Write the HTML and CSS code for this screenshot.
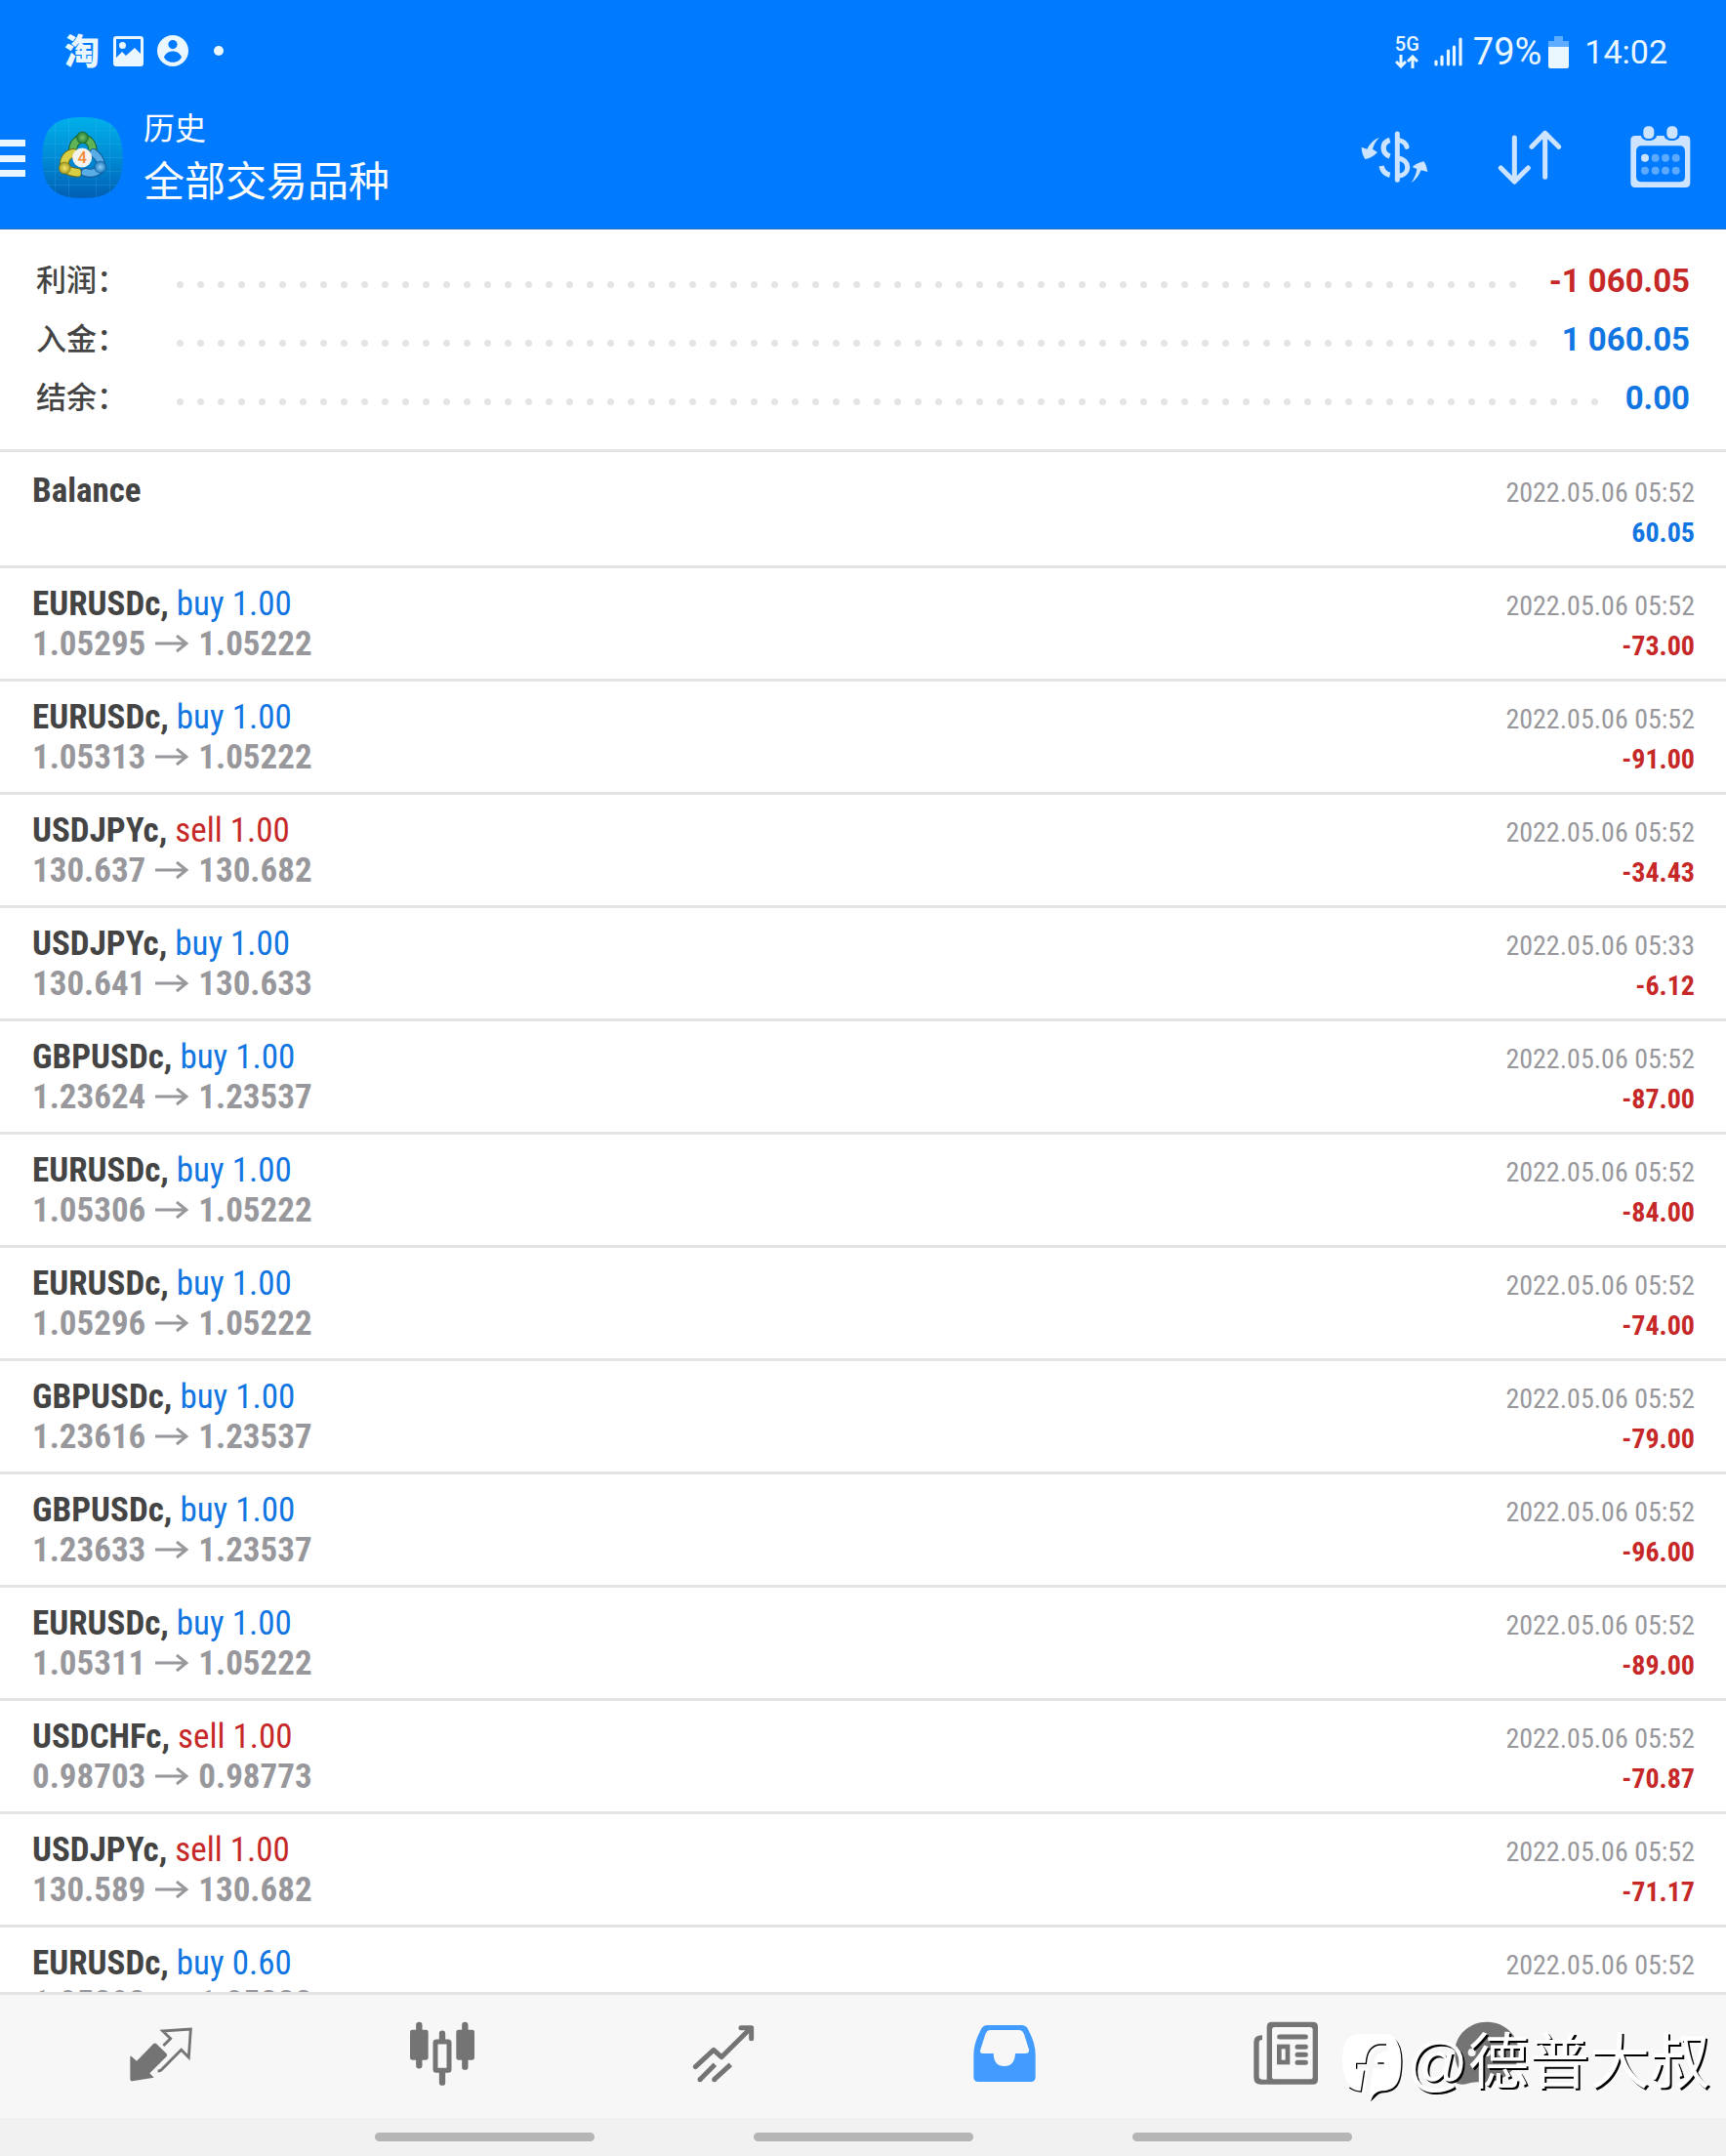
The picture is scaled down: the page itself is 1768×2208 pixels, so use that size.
FILE: index.html
```html
<!DOCTYPE html>
<html lang="zh-CN">
<head>
<meta charset="utf-8">
<title>历史</title>
<link rel="stylesheet" href="styles.css">
</head>
<body>
<div class="app">
  <header class="header">
    <div class="status">
      <div class="status-left">
        <span class="taobao">淘</span>
        <svg width="31" height="31" viewBox="0 0 31 31"><path fill-rule="evenodd" d="M3 0h25a3 3 0 0 1 3 3v25a3 3 0 0 1-3 3H3a3 3 0 0 1-3-3V3a3 3 0 0 1 3-3zM3 3v19l6-6 4 4 9-8 6 6V3z"/><circle cx="9.500" cy="9.500" r="3.500"/></svg>
        <svg width="32" height="32" viewBox="0 0 32 32"><path fill-rule="evenodd" d="M16 0a16 16 0 1 1 0 32a16 16 0 1 1 0-32zM16 5a4.600 4.600 0 1 0 0 9.200a4.600 4.600 0 1 0 0-9.200zM7 22.500c3 7 15 7 18 0c-3-8-15-8-18 0z"/></svg>
        <svg class="more-dot" width="10" height="10" viewBox="0 0 10 10"><circle cx="5" cy="5" r="5"/></svg>
      </div>
      <div class="status-right">
        <div class="network">
          <span>5G</span>
          <svg width="24" height="14" viewBox="0 0 24 14"><path class="line" stroke-width="3" d="M6 0v12M1 7l5 5 5-5M18 14V2M13 7l5-5 5 5"/></svg>
        </div>
        <svg class="signal" width="29" height="30" viewBox="0 0 29 30"><path class="line" stroke-width="3.200" stroke-linecap="round" d="M2 25v3M8 20v8M14.500 14v14M20.500 10v18M27 2v26"/></svg>
        <span class="battery-level">79%</span>
        <svg class="battery" width="21" height="33" viewBox="0 0 21 33"><path opacity=".4" d="M6 0h9v5h6v7H0V5h6z"/><path d="M0 11h21v20a2 2 0 0 1-2 2H2a2 2 0 0 1-2-2z"/></svg>
        <time class="clock">14:02</time>
      </div>
    </div>
    <div class="toolbar">
      <button class="menu" aria-label="菜单"><svg width="26" height="40" viewBox="0 0 26 40"><path d="M0 2h26v7H0zM0 18h26v7H0zM0 33h26v7H0z"/></svg></button>
      <svg class="logo" width="83" height="83" viewBox="8 14 248 250">
        <defs>
          <linearGradient id="sky" x1="0" y1="0" x2="0" y2="1"><stop offset="0" stop-color="#00b0ea"/><stop offset=".5" stop-color="#008bd5"/><stop offset="1" stop-color="#005fb4"/></linearGradient>
          <radialGradient id="green"><stop offset="0" stop-color="#78c36c"/><stop offset="1" stop-color="#237d35"/></radialGradient>
          <radialGradient id="gold"><stop offset="0" stop-color="#f3e86c"/><stop offset="1" stop-color="#a79a22"/></radialGradient>
          <radialGradient id="blue"><stop offset="0" stop-color="#8fd0f6"/><stop offset="1" stop-color="#1f7cc0"/></radialGradient>
        </defs>
        <path fill="url(#sky)" d="M132 14c88 0 124 34 124 125s-36 125-124 125S8 230 8 139 44 14 132 14z"/>
        <path stroke="#5cc4f0" stroke-opacity=".3" stroke-width="2" fill="none" d="M48 30v218M90 18v242M174 18v242M216 30v218M24 56h216M12 97h240M8 139h248M12 181h240M24 223h216"/>
        <g fill="none" stroke-linecap="round">
          <path stroke="#17602a" stroke-width="27" d="M102 118c0-50 62-50 62 0"/><path stroke="#5fb357" stroke-width="21" d="M102 118c0-50 62-50 62 0"/>
          <path stroke="#716c14" stroke-width="29" d="M104 125c-36 6-42 58 12 60"/><path stroke="#d9cf45" stroke-width="23" d="M104 125c-36 6-42 58 12 60"/>
          <path stroke="#145591" stroke-width="27" d="M166 124c44 36 18 72-26 60"/><path stroke="#58ade6" stroke-width="21" d="M166 124c44 36 18 72-26 60"/>
        </g>
        <circle cx="132" cy="77" r="18" fill="url(#green)" stroke="#17602a" stroke-width="2"/>
        <circle cx="77" cy="171" r="18" fill="url(#gold)" stroke="#716c14" stroke-width="2"/>
        <circle cx="187" cy="168" r="18" fill="url(#blue)" stroke="#145591" stroke-width="2"/>
        <circle cx="131" cy="139" r="30" fill="#f4f2ee"/>
        <text x="131" y="156" class="logo-digit">4</text>
      </svg>
      <div class="titles"><h1>历史</h1><p>全部交易品种</p></div>
      <div class="actions">
        <button aria-label="交易品种"><svg width="70" height="54" viewBox="25 37 210 162">
          <path d="M82 57Q66 72 61 93l15 10q-18 18-38 21Q27 107 27 87l17 6Q58 65 82 57zM180 196q18-10 30-38l20 5Q228 145 219 131q-20 3-36 17l14 6q-3 22-17 42z"/>
          <path class="line" stroke-width="15" d="M137 46v142" stroke-linecap="round"/>
          <path class="line" stroke-width="16" d="M114 65c-26 8-26 41 0 50M88 145q5 23 26 28"/>
          <path class="line" stroke-width="15" stroke-linecap="round" d="M142 66q20 4 24 20"/><path class="line" stroke-width="15" d="M139 122c38 2 40 50 0 54"/>
        </svg></button>
        <button aria-label="排序"><svg width="66" height="57" viewBox="513 397 198 171"><path class="line" stroke-width="15" stroke-linecap="round" stroke-linejoin="round" d="M565 421v135M523 514l42 42 42-42M659 542V407M618 449l41-42 42 42"/></svg></button>
        <button aria-label="日期"><svg width="62" height="64" viewBox="929 384 186 192">
          <path fill-rule="evenodd" d="M944 414h18c2 20 46 20 48 0h23c2 20 46 20 48 0h18q14 0 14 14v131q0 14-14 14H944q-14 0-14-14V428q0-14 14-14zM964 445q-17 0-17 17v77q0 17 17 17h116q17 0 17-17v-77q0-17-17-17z"/>
          <rect x="969" y="385" width="33" height="38" rx="14"/><rect x="1041" y="385" width="33" height="38" rx="14"/>
          <circle cx="974" cy="482" r="12"/><g opacity=".45"><circle cx="1006" cy="482" r="12"/><circle cx="1037" cy="482" r="12"/><circle cx="1069" cy="482" r="12"/><circle cx="974" cy="521" r="12"/><circle cx="1006" cy="521" r="12"/><circle cx="1037" cy="521" r="12"/><circle cx="1069" cy="521" r="12"/></g>
        </svg></button>
      </div>
    </div>
  </header>

  <dl class="summary">
    <div><dt>利润：</dt><span class="dots"></span><dd class="loss">-1 060.05</dd></div>
    <div><dt>入金：</dt><span class="dots"></span><dd class="gain">1 060.05</dd></div>
    <div><dt>结余：</dt><span class="dots"></span><dd class="gain">0.00</dd></div>
  </dl>

  <svg hidden><symbol id="arrow" viewBox="0 0 34 20"><path d="M0 9h32M22 1l10 8-10 8" fill="none" stroke="#98989c" stroke-width="3"/></symbol></svg>
  <main class="deals">
    <article class="balance"><p class="line1"><b>Balance</b><time>2022.05.06 05:52</time></p><p class="line2"><span>&nbsp;</span><strong class="gain">60.05</strong></p></article>
    <article><p class="line1"><span><b>EURUSDc,</b> <span class="gain">buy 1.00</span></span><time>2022.05.06 05:52</time></p><p class="line2"><span class="prices">1.05295<svg><use href="#arrow"/></svg>1.05222</span><strong class="loss">-73.00</strong></p></article>
    <article><p class="line1"><span><b>EURUSDc,</b> <span class="gain">buy 1.00</span></span><time>2022.05.06 05:52</time></p><p class="line2"><span class="prices">1.05313<svg><use href="#arrow"/></svg>1.05222</span><strong class="loss">-91.00</strong></p></article>
    <article><p class="line1"><span><b>USDJPYc,</b> <span class="loss">sell 1.00</span></span><time>2022.05.06 05:52</time></p><p class="line2"><span class="prices">130.637<svg><use href="#arrow"/></svg>130.682</span><strong class="loss">-34.43</strong></p></article>
    <article><p class="line1"><span><b>USDJPYc,</b> <span class="gain">buy 1.00</span></span><time>2022.05.06 05:33</time></p><p class="line2"><span class="prices">130.641<svg><use href="#arrow"/></svg>130.633</span><strong class="loss">-6.12</strong></p></article>
    <article><p class="line1"><span><b>GBPUSDc,</b> <span class="gain">buy 1.00</span></span><time>2022.05.06 05:52</time></p><p class="line2"><span class="prices">1.23624<svg><use href="#arrow"/></svg>1.23537</span><strong class="loss">-87.00</strong></p></article>
    <article><p class="line1"><span><b>EURUSDc,</b> <span class="gain">buy 1.00</span></span><time>2022.05.06 05:52</time></p><p class="line2"><span class="prices">1.05306<svg><use href="#arrow"/></svg>1.05222</span><strong class="loss">-84.00</strong></p></article>
    <article><p class="line1"><span><b>EURUSDc,</b> <span class="gain">buy 1.00</span></span><time>2022.05.06 05:52</time></p><p class="line2"><span class="prices">1.05296<svg><use href="#arrow"/></svg>1.05222</span><strong class="loss">-74.00</strong></p></article>
    <article><p class="line1"><span><b>GBPUSDc,</b> <span class="gain">buy 1.00</span></span><time>2022.05.06 05:52</time></p><p class="line2"><span class="prices">1.23616<svg><use href="#arrow"/></svg>1.23537</span><strong class="loss">-79.00</strong></p></article>
    <article><p class="line1"><span><b>GBPUSDc,</b> <span class="gain">buy 1.00</span></span><time>2022.05.06 05:52</time></p><p class="line2"><span class="prices">1.23633<svg><use href="#arrow"/></svg>1.23537</span><strong class="loss">-96.00</strong></p></article>
    <article><p class="line1"><span><b>EURUSDc,</b> <span class="gain">buy 1.00</span></span><time>2022.05.06 05:52</time></p><p class="line2"><span class="prices">1.05311<svg><use href="#arrow"/></svg>1.05222</span><strong class="loss">-89.00</strong></p></article>
    <article><p class="line1"><span><b>USDCHFc,</b> <span class="loss">sell 1.00</span></span><time>2022.05.06 05:52</time></p><p class="line2"><span class="prices">0.98703<svg><use href="#arrow"/></svg>0.98773</span><strong class="loss">-70.87</strong></p></article>
    <article><p class="line1"><span><b>USDJPYc,</b> <span class="loss">sell 1.00</span></span><time>2022.05.06 05:52</time></p><p class="line2"><span class="prices">130.589<svg><use href="#arrow"/></svg>130.682</span><strong class="loss">-71.17</strong></p></article>
    <article><p class="line1"><span><b>EURUSDc,</b> <span class="gain">buy 0.60</span></span><time>2022.05.06 05:52</time></p><p class="line2"><span class="prices">1.05292<svg><use href="#arrow"/></svg>1.05222</span></p></article>
  </main>

  <footer class="footer">
    <nav class="tabs">
      <a href="#quotes" aria-label="行情"><svg viewBox="216 271 198 198"><path d="M223 378l17 15 51-52q5-5 10 0l31 30q3 4 0 8l-52 52 13 13-66 11q-7 1-7-6v-66q0-8 3-5z"/><path class="line" stroke-width="8.500" d="M322 346l22-22-24-23 86-6-6 87-23-23-61 61q-3 4-11 4"/></svg></a>
      <a href="#charts" aria-label="图表"><svg viewBox="1079 271 198 198"><path class="line" stroke-width="19" stroke-linecap="round" d="M1107 283v124M1248 283v128M1178 309v20M1178 430v29"/><rect x="1079" y="297" width="56" height="93" rx="7"/><rect x="1221" y="297" width="56" height="93" rx="7"/><rect class="line" x="1157" y="334" width="42" height="88" rx="3" stroke-width="15"/></svg></a>
      <a href="#trade" aria-label="交易"><svg viewBox="143 150 198 198"><path class="line" stroke-width="15" stroke-linecap="round" stroke-linejoin="round" d="M156 290l56-52 24 22 86-85"/><path class="line" stroke-width="15" stroke-linejoin="round" stroke-linecap="round" d="M296 170h32v33"/><path class="line" stroke-width="15" d="M170 329l46-46M214 329l50-46"/><circle cx="170" cy="329" r="7.500"/><circle cx="214" cy="329" r="7.500"/></svg></a>
      <a href="#history" class="active" aria-label="历史" aria-current="page"><svg viewBox="1008 150 198 198"><path fill-rule="evenodd" d="M1055 162h104q15 0 21 14 22 42 22 75v71q0 14-14 14h-162q-14 0-14-14v-71q0-33 22-75 6-14 21-14zM1064 177q-11 0-16 13l-15 47q-4 12 9 12h31q1 39 33 39t34-39h31q13 0 11-12l-15-47q-5-13-16-13z"/></svg></a>
      <a href="#news" aria-label="新闻"><svg viewBox="73 271 198 198"><path fill-rule="evenodd" d="M129 273h127q15 0 15 15v162q0 15-15 15H95q-21 0-21-21V335q0-21 26-21v14q-10 0-10 10v102q0 10 10 10h14V288q0-15 15-15zM138 289q-8 0-8 8v144q0 8 8 8h109q8 0 8-8V297q0-8-8-8z"/><path class="line" stroke-width="15" stroke-linecap="round" d="M153 319h80M208 350h25M208 374h25M208 398h25"/><rect class="line" x="152" y="349" width="26" height="48" stroke-width="14"/></svg></a>
      <a href="#messages" aria-label="消息"><svg viewBox="692 271 198 198"><path d="M791 273c54 0 98 40 98 94s-52 98-120 91q-20-2-36 4-16 6-34 0l-6-10q18-12 12-32-12-24-12-53c0-54 44-94 98-94z"/><g fill="#f6f6f6"><circle cx="745" cy="367" r="12"/><circle cx="791" cy="367" r="12"/><circle cx="837" cy="367" r="12"/></g></svg></a>
    </nav>
    <div class="gestures"><span></span><span></span><span></span></div>
    <div class="watermark">
      <svg width="66" height="74" viewBox="4 66 198 222">
        <path fill="#fff" d="M62 75h78q50 0 50 66c0 68-10 98-52 109q-24 2-40 30L68 252Q10 236 10 155 10 75 62 75z"/>
        <path d="M84 276l14-105q4-48 52-52M56 173h82" fill="none" stroke="#f7f7f7" stroke-width="16"/>
        <path d="M54 182v-16h29q3-54 42-58h20M32 240q16 12 36 12l10-64M119 165h19" fill="none" stroke="#000" stroke-width="4"/>
        <path fill="#000" d="M172 90q23 22 23 68c-1 68-14 94-58 98-18 0-22 12-40 27q8-30 34-33c48-2 59-30 60-92q0-44-19-68z"/>
      </svg>
      <span>@德普大叔</span>
    </div>
  </footer>
</div>
</body>
</html>
```
FILE: styles.css
```css
* { box-sizing: border-box; }
body, h1, p, dl, dd { margin: 0; }
body { background: #fff; color: #444; font-family: Roboto, "Noto Sans CJK SC", sans-serif; }
button { border: 0; padding: 0; background: none; color: inherit; }
svg { display: block; flex: none; fill: currentColor; }
svg[hidden] { display: none; }
.line { fill: none; stroke: currentColor; }
.gain { color: #1276e2; }
.loss { color: #c62828; }

.app { display: flex; flex-direction: column; height: 100vh; overflow: hidden; }

.header { flex: none; background: #007aff; color: #eaf7ff; border-bottom: 1px solid #1c6dc4; }
.status { display: flex; justify-content: space-between; height: 88px; padding: 18px 60px 0 66px; }
.status-left, .status-right { display: flex; align-items: center; }
.status-left { gap: 14px; padding-bottom: 2px; }
.taobao { padding-bottom: 4px; font: 900 36px/36px "Noto Sans CJK SC", sans-serif; }
.more-dot { margin-left: 12px; }
.network { display: flex; flex-direction: column; align-items: center; gap: 2px; font-weight: 500; font-size: 20px; line-height: 18px; }
.signal { margin-left: 15px; }
.battery-level { margin-left: 11px; font-size: 38px; line-height: 40px; }
.battery { margin-left: 7px; }
.clock { margin-left: 16px; font-size: 34px; line-height: 40px; }

.toolbar { display: flex; align-items: center; height: 146px; padding-right: 36px; }
.logo { margin-left: 17px; }
.logo-digit { font: 500 50px Roboto, sans-serif; fill: #f08a35; text-anchor: middle; }
.titles { flex: 1; margin-left: 21px; color: #fff; font-family: "Noto Sans CJK SC", sans-serif; }
.titles h1 { font-weight: 400; font-size: 32px; line-height: 44px; }
.titles p { font-size: 42px; line-height: 64px; }
.actions { display: flex; align-items: center; gap: 70px; color: #cce4ff; }

.summary { flex: none; padding: 22px 37px 23px; border-bottom: 3px solid #e4e4e4; }
.summary div { display: flex; align-items: center; height: 60px; }
.summary dt { width: 137px; padding-bottom: 4px; font: 500 31px/44px "Noto Sans CJK SC", sans-serif; }
.summary dd { margin-left: 23px; font-size: 33px; font-weight: 700; }
.dots { flex: 1; height: 7px; margin-top: 9px; background: radial-gradient(circle, #e4e4e4 3px, transparent 4px) 0 0 / 21px 7px repeat-x; }

.deals { flex: 1; min-height: 0; overflow: hidden; font-family: "Roboto Condensed", Roboto, sans-serif; font-size: 35px; line-height: 41px; }
.deals article { padding: 16px 32px 15px 33px; border-bottom: 3px solid #e4e4e4; }
.deals .balance { padding-top: 19px; }
.line1, .line2 { display: flex; justify-content: space-between; align-items: baseline; height: 41px; }
.deals time { color: #98989c; font-size: 28px; }
.deals strong { font-size: 28px; }
.prices { display: flex; align-items: center; gap: 10px; color: #98989c; font-weight: 700; }
.prices svg { width: 34px; height: 20px; }

.footer { flex: none; position: relative; border-top: 3px solid #e4e4e4; background: #f1f1f1; }
.tabs { display: grid; grid-template-columns: repeat(5, 1fr) 124px; justify-items: center; padding: 27px 183px 33px 21px; background: #f7f7f7; }
.tabs a { color: #747474; }
.tabs .active { color: #429cff; }
.tabs svg { width: 66px; height: 66px; }
.gestures { display: flex; justify-content: center; gap: 163px; padding: 15px 0; }
.gestures span { width: 225px; height: 9px; border-radius: 5px; background: #b5b5b5; }
.watermark { position: absolute; right: 16px; top: 25px; display: flex; align-items: flex-start; gap: 2px; color: #fff; font: 400 62px/90px "Liberation Sans", "Noto Sans CJK SC", sans-serif; text-shadow: 2px 2px 0 #000; }
.watermark svg { margin-top: 12px; }
```
